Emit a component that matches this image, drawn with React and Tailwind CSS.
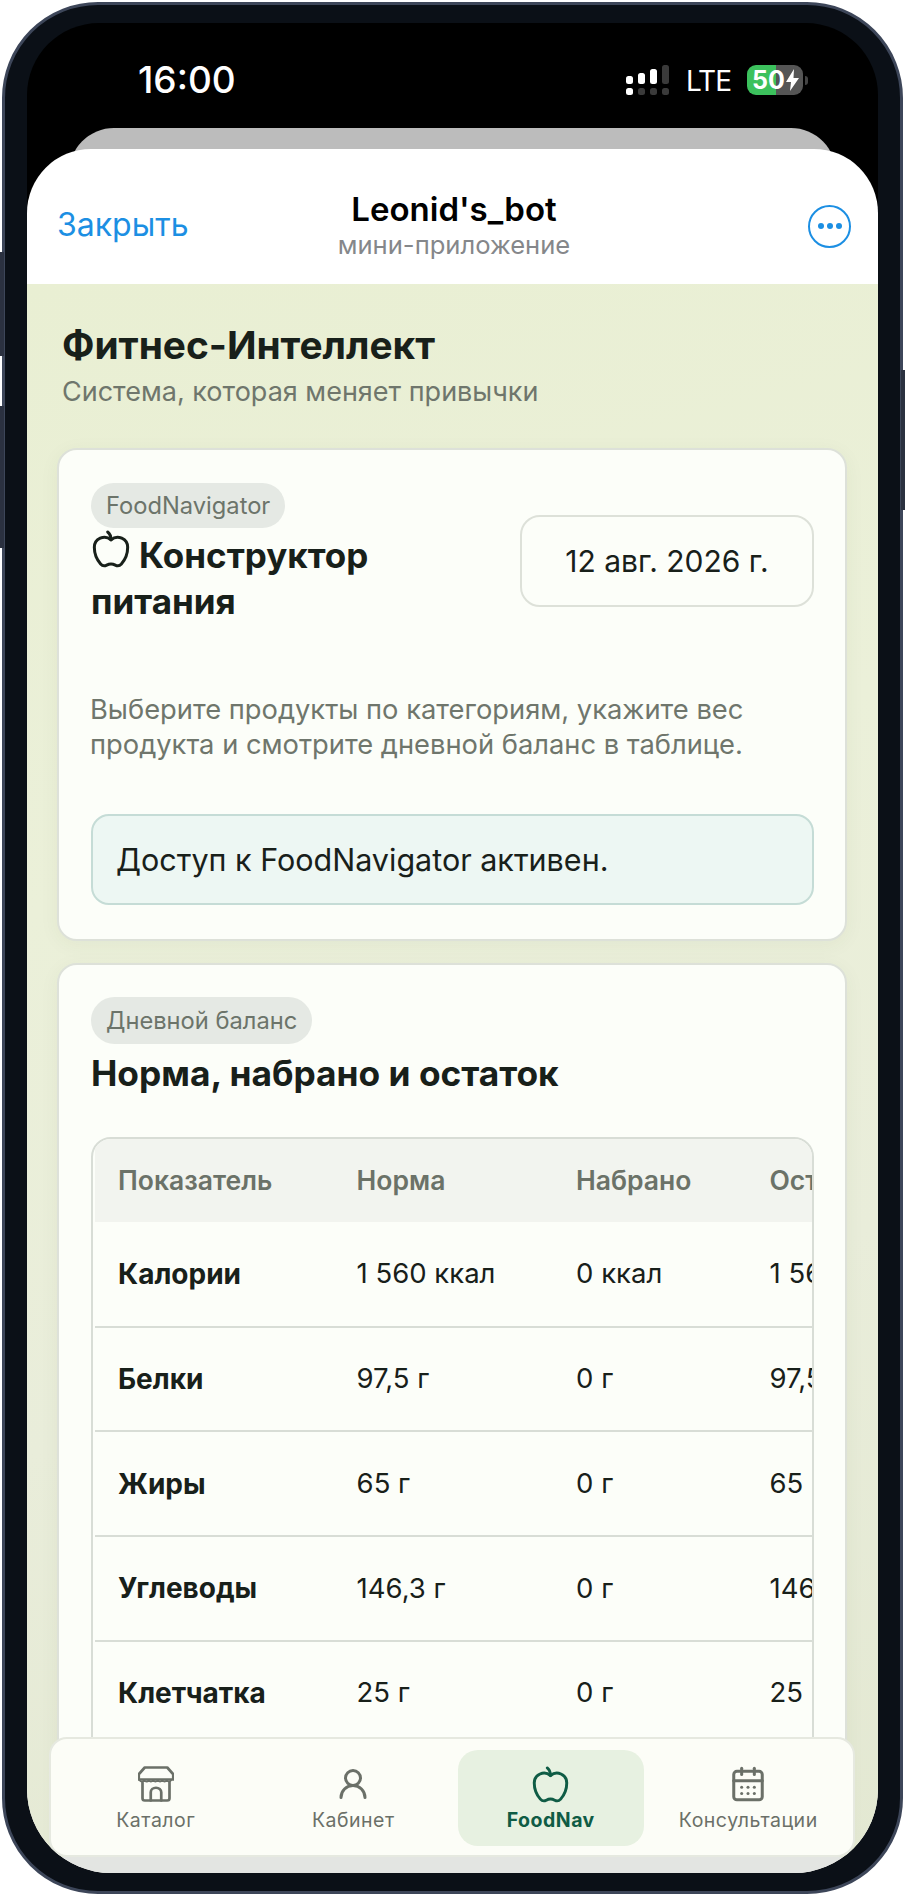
import React from 'react';
import { UserRound, CalendarDays } from 'lucide-react';

const rows = [
  ['Калории', '1 560 ккал', '0 ккал', '1 560 ккал'],
  ['Белки', '97,5 г', '0 г', '97,5 г'],
  ['Жиры', '65 г', '0 г', '65 г'],
  ['Углеводы', '146,3 г', '0 г', '146,3 г'],
  ['Клетчатка', '25 г', '0 г', '25 г'],
];

const AppleIcon = ({ size = 40, className = '' }) => (
  <svg width={size} height={size} viewBox="0 0 24 24" fill="none" stroke="currentColor" strokeWidth="1.8" strokeLinecap="round" strokeLinejoin="round" className={className}>
    <path d="M12 6.500C12 4.500 11.500 3 10 1.800" />
    <path d="M18.237 21A15 15 0 0 0 22 11a6 6 0 0 0-10-4.472A6 6 0 0 0 2 11a15.100 15.100 0 0 0 3.763 10 3 3 0 0 0 3.648.648 5.500 5.500 0 0 1 5.178 0A3 3 0 0 0 18.237 21" />
  </svg>
);

const StoreIcon = () => (
  <svg width="36" height="36" viewBox="0 0 24 24" fill="none" stroke="currentColor" strokeWidth="1.8" strokeLinejoin="round" strokeLinecap="round">
    <path d="M4.500 1h15l4 4.500V9H.5V5.500z" />
    <path d="M1 9.500c1 1.300 2 1.300 3.100 0 1 1.300 2.100 1.300 3 0 1 1.300 2 1.300 3 0 1 1.300 2 1.300 3.100 0 1 1.300 2 1.300 3 0 1 1.300 2 1.300 3 0 1 1.300 2 1.300 2.800 0" strokeWidth="1.2" />
    <path d="M3 11v10.500a1.500 1.500 0 0 0 1.500 1.500h15a1.500 1.500 0 0 0 1.500-1.500V11" />
    <path d="M8.500 23v-5.500a3.500 3 0 0 1 7 0V23" />
  </svg>
);

const tabs = [
  { label: 'Каталог', icon: <StoreIcon /> },
  { label: 'Кабинет', icon: <UserRound size={36} strokeWidth={2} /> },
  { label: 'FoodNav', icon: <AppleIcon size={39} />, active: true },
  { label: 'Консультации', icon: <CalendarDays size={38} strokeWidth={1.9} /> },
];

const SignalIcon = () => (
  <svg width="44" height="30" viewBox="0 0 44 30">
    <rect x="0" y="11" width="7" height="8" rx="2.500" fill="#fff" />
    <rect x="12" y="8" width="7" height="11" rx="2.500" fill="#fff" />
    <rect x="24" y="4" width="7" height="15" rx="2.500" fill="#fff" />
    <rect x="36" y="0" width="7" height="19" rx="2.500" fill="#3a3a3a" />
    <rect x="0" y="23" width="7" height="7" rx="2.500" fill="#fff" />
    <rect x="12" y="23" width="7" height="7" rx="2.500" fill="#3a3a3a" />
    <rect x="24" y="23" width="7" height="7" rx="2.500" fill="#3a3a3a" />
    <rect x="36" y="23" width="7" height="7" rx="2.500" fill="#3a3a3a" />
  </svg>
);

const App = () => {
  return (
    <div className="w-[905px] h-[1896px] bg-white p-[2px] font-['Inter',sans-serif] relative overflow-hidden">
      {/* side buttons */}
      <div className="absolute left-0 top-[252px] w-[4px] h-[104px] bg-[#2b3140]" />
      <div className="absolute left-0 top-[406px] w-[4px] h-[142px] bg-[#2b3140]" />
      <div className="absolute right-0 top-[370px] w-[4px] h-[140px] bg-[#2b3140]" />

      <div className="h-full rounded-[96px] border-[3px] border-[#3d4659] bg-[#0b1017] pt-[18px] pb-[18px] px-[22px]">
        <div className="relative h-full rounded-t-[72px] rounded-b-[84px] bg-black overflow-hidden flex flex-col">
          {/* status bar */}
          <div className="h-[105px] shrink-0 flex items-start justify-between pl-[111px] pr-[70px] pt-[34px] text-white">
            <span className="text-[37px] leading-[46px] font-medium">16:00</span>
            <div className="flex items-center gap-[16px] pt-[7px]">
              <SignalIcon />
              <span className="text-[28px] leading-[30px] font-normal tracking-[-1px] pt-[2px]">LTE</span>
              <div className="flex items-center gap-[2px]">
                <div className="w-[56px] h-[30px] rounded-[9px] bg-[linear-gradient(90deg,#3cc15d_52%,#555_52%)] flex items-center pl-[5px] gap-[1px]">
                  <span className="text-[25px] leading-[30px] font-bold">50</span>
                  <svg width="13" height="22" viewBox="0 0 13 22" fill="#fff"><path d="M8 0 0 13h5l-1 9 9-13H7.500z" /></svg>
                </div>
                <div className="w-[3px] h-[9px] rounded-r bg-[#444]" />
              </div>
            </div>
          </div>
          <div className="shrink-0 h-[60px] mx-[42px] rounded-t-[45px] bg-[#bcbcbc]" />

          {/* sheet */}
          <div className="relative -mt-[39px] flex-1 min-h-0 rounded-t-[64px] overflow-hidden flex flex-col bg-white">
            <div className="h-[135px] shrink-0 grid grid-cols-[1fr_auto_1fr] items-center pl-[30px] pr-[27px] pt-[15px]">
              <span className="mt-[2px] text-[32px] text-[#1c8fe3]">Закрыть</span>
              <div className="text-center">
                <div className="text-[33px] leading-[42px] font-semibold text-black">Leonid's_bot</div>
                <div className="text-[25.600px] leading-[30px] text-[#85878a]">мини-приложение</div>
              </div>
              <div className="flex justify-end">
                <div className="mt-[4px] w-[43px] h-[43px] rounded-full border-[2.5px] border-[#1c8fe3] flex items-center justify-center gap-[3px]">
                  <span className="w-[6px] h-[6px] rounded-full bg-[#1c8fe3]" />
                  <span className="w-[6px] h-[6px] rounded-full bg-[#1c8fe3]" />
                  <span className="w-[6px] h-[6px] rounded-full bg-[#1c8fe3]" />
                </div>
              </div>
            </div>

            <div className="flex-1 min-h-0 overflow-hidden bg-[linear-gradient(165deg,#e9efd3_0%,#ebf0d9_35%,#e9edda_65%,#e3e8d2_100%)] pl-[30px] pr-[31px]">
              <h1 className="mt-[38px] ml-[5px] text-[38.800px] leading-[46px] font-bold text-[#18201a]">Фитнес-Интеллект</h1>
              <p className="mt-[7px] ml-[5px] text-[27px] leading-[34px] text-[#6f766c]">Система, которая меняет привычки</p>

              <section className="mt-[39px] rounded-[20px] border-2 border-[#dde1d9] bg-[#fcfef9] pl-[32px] pr-[31px] pt-[33px] h-[493px] shadow-[0_4px_20px_rgba(60,70,40,0.05)]">
                <div className="flex justify-between">
                  <div className="w-[390px]">
                    <span className="inline-block h-[45px] px-[15px] rounded-full bg-[#e5e9e4] text-[23.700px] leading-[45px] text-[#6c746a]">FoodNavigator</span>
                    <h2 className="mt-[4px] text-[35px] leading-[46px] font-bold text-[#18201a]">
                      <AppleIcon className="inline-block align-top mr-[8px] -mt-[3px]" />
                      Конструктор питания
                    </h2>
                  </div>
                  <div className="mt-[32px] w-[294px] h-[92px] rounded-[20px] border-2 border-[#dde1d9] flex items-center justify-center text-[30px] text-[#18201a]">12 авг. 2026 г.</div>
                </div>
                <p className="mt-[68px] -ml-[1px] text-[27.300px] leading-[35px] text-[#6f766c]">Выберите продукты по категориям, укажите вес продукта и смотрите дневной баланс в таблице.</p>
                <div className="mt-[52px] h-[91px] rounded-[18px] border-2 border-[#c5dcd6] bg-[#edf7f3] flex items-center px-[23px] text-[30.500px] text-[#18201a]">Доступ к FoodNavigator активен.</div>
              </section>

              <section className="mt-[22px] rounded-[20px] border-2 border-[#dde1d9] bg-[#fcfef9] pl-[32px] pr-[31px] pt-[32px] shadow-[0_4px_20px_rgba(60,70,40,0.05)]">
                <span className="inline-block h-[47px] px-[15px] rounded-full bg-[#e5e9e4] text-[23.700px] leading-[47px] text-[#6c746a]">Дневной баланс</span>
                <h2 className="mt-[7px] text-[35.300px] leading-[46px] font-bold text-[#18201a]">Норма, набрано и остаток</h2>
                <div className="mt-[40px] h-[720px] rounded-[20px] border-2 border-[#d8ddd6] overflow-hidden">
                  <table className="table-fixed border-collapse w-[883px] ml-[2px]">
                    <colgroup>
                      <col className="w-[261px]" />
                      <col className="w-[219px]" />
                      <col className="w-[193px]" />
                      <col className="w-[208px]" />
                    </colgroup>
                    <thead>
                      <tr className="h-[83px] bg-[#f2f4ef] text-left text-[26.500px] font-semibold text-[#6b7268]">
                        <th className="pl-[23px] font-semibold">Показатель</th>
                        <th className="font-semibold">Норма</th>
                        <th className="font-semibold">Набрано</th>
                        <th className="font-semibold">Остаток</th>
                      </tr>
                    </thead>
                    <tbody>
                      {rows.map((row) => (
                        <tr key={row[0]} className="h-[104.700px] border-b-2 border-[#d8ddd6] text-[27.500px] text-[#18201a]">
                          <td className="pl-[23px] text-[28px] font-bold">{row[0]}</td>
                          <td>{row[1]}</td>
                          <td>{row[2]}</td>
                          <td className="whitespace-nowrap">{row[3]}</td>
                        </tr>
                      ))}
                    </tbody>
                  </table>
                </div>
              </section>
            </div>
            <div className="h-[16px] shrink-0 bg-[#e3e5e2]" />
          </div>

          {/* bottom nav */}
          <nav className="absolute left-[22px] bottom-[16px] w-[806px] h-[120px] rounded-[18px] border-2 border-[#e6e9e0] bg-[#fcfdf7] pt-[11px] px-[12px] grid grid-cols-4 gap-[12px] items-start">
            {tabs.map((tab) => (
              <div
                key={tab.label}
                className={`h-[96px] pt-[3px] rounded-[20px] flex flex-col items-center justify-center ${tab.active ? 'bg-[#e7f1e1] text-[#0f5c45]' : 'text-[#6b7068]'}`}
              >
                <div className="h-[38px] flex items-center">{tab.icon}</div>
                <span className={`mt-[3px] text-[19.500px] leading-[28px] tracking-[0.5px] whitespace-nowrap ${tab.active ? 'font-bold' : ''}`}>{tab.label}</span>
              </div>
            ))}
          </nav>
        </div>
      </div>
    </div>
  );
};

export default App;
